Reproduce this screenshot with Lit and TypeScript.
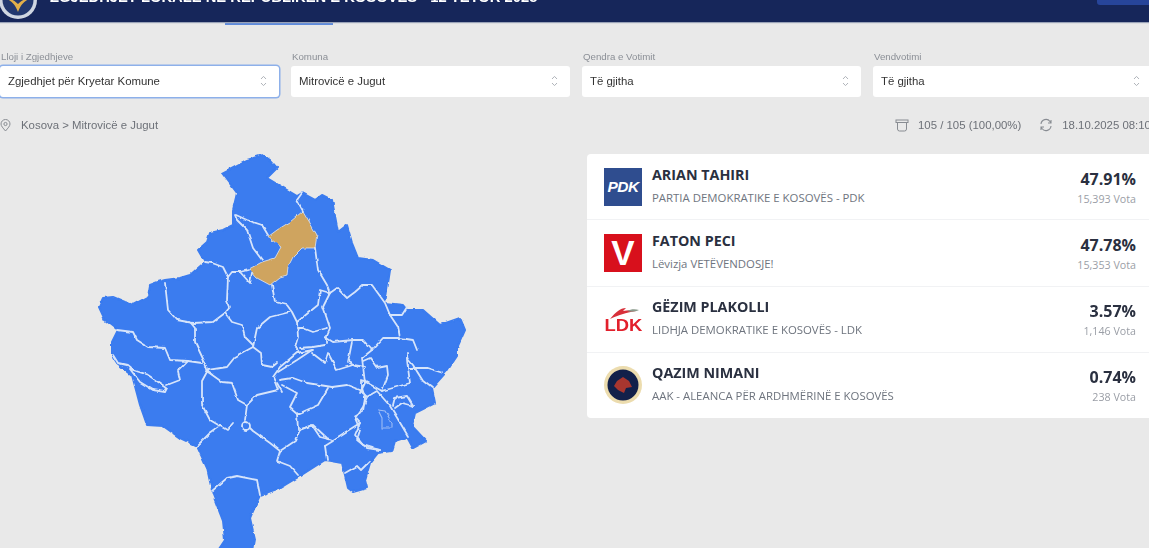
import { LitElement, html, css, svg } from "lit";
import { customElement } from "lit/decorators.js";

const OUTLINE = "263,155 270,160 277,168 267,178 287,190 297,196 302,193 315,200 322,195 332,200 338,232 347,225 352,243 358,258 373,260 390,270 385,303 403,305 407,310 423,310 440,325 460,318 465,330 457,348 457,356 447,371 432,388 435,403 415,413 412,426 426,441 413,448 407,437 395,441 392,451 378,453 370,463 365,480 367,488 353,492 348,488 345,475 342,463 325,460 300,476 280,488 260,495 250,518 255,540 253,552 217,552 225,540 223,521 213,495 207,468 197,446 180,438 163,426 147,425 140,405 132,375 117,363 112,355 112,342 118,330 105,320 99,307 103,298 113,297 125,302 133,305 148,297 150,285 158,282 165,280 180,278 190,275 205,262 198,250 207,242 210,233 223,230 233,225 233,210 237,193 222,173 247,160";

const GOLD = "269,236 277,230 285,225 290,222 303,211 310,223 317,235 315,248 302,248 293,257 288,267 287,275 280,277 270,285 257,278 249,269 262,262 275,258 281,247 272,240";

const LINES = [
  "235,215 237,220 247,230 253,248 262,260",
  "236,215 247,220 262,225 268,235",
  "205,262 212,263 223,267 228,277 232,272 240,272 248,270",
  "240,272 250,283 252,273",
  "302,193 297,200 303,211",
  "228,277 227,300 230,307 225,313 213,322 193,323 177,320 168,310 165,283",
  "225,313 232,322 242,325 245,337 253,345",
  "190,322 195,328 195,342 205,363 208,372",
  "208,370 202,381 202,405 210,420 220,426",
  "220,426 210,433 197,446",
  "208,372 222,382 232,383 238,400 247,405 245,420",
  "233,423 227,430 220,426",
  "247,405 257,395 278,390 273,377 280,367 297,353 313,350",
  "208,370 227,367 235,357 253,347 261,353 262,365 272,367 277,363",
  "117,330 133,332 137,340 148,347 165,348 170,360 188,361 202,363",
  "188,361 178,371 180,380 167,385",
  "113,355 118,363 127,365 133,370 148,375 167,388 165,392 153,390 140,382 133,373 127,365",
  "272,285 275,302 287,305 292,312 297,322 298,337 295,347 300,353",
  "290,312 270,317 257,328 253,347",
  "315,248 318,270 327,285 330,293 323,307 330,328 327,335 327,343",
  "330,293 320,290 318,305 297,322",
  "297,328 303,328 313,332 327,328",
  "300,348 313,347 325,345",
  "330,293 337,288 347,298 355,292 363,285 372,285 385,303 390,315 398,327 400,338 413,340 417,350",
  "390,315 402,315 407,307",
  "325,337 333,342 353,340 363,340 372,350 383,338 400,338",
  "352,342 348,362 357,367",
  "372,350 362,358 365,383 360,393",
  "312,353 325,363 328,353 337,370 353,365 365,367",
  "278,372 297,360 312,350",
  "280,380 293,378 307,383 332,387 347,385 360,390 367,397 363,407 355,418 360,430 357,440 367,448 380,450",
  "282,385 297,393 290,407 297,413 298,430 312,425 320,437 332,440",
  "328,388 318,405 300,413 297,413",
  "277,383 282,392",
  "300,430 295,441 280,451 270,443 253,431 250,428",
  "300,430 313,425 327,438 333,440 352,428 360,423 355,435 363,445 380,450",
  "360,423 354,416 363,411 365,398 377,391 390,406 405,431 408,436",
  "393,406 395,398 407,396 413,406",
  "395,408 402,403 413,406",
  "362,388 365,398",
  "362,388 362,380 382,391 393,388 410,383 408,368 407,358 413,365 423,381 432,388",
  "408,368 427,368 443,373",
  "363,361 370,358 377,368 387,366 388,375 382,391",
  "407,353 408,368",
  "280,451 277,461 290,466 298,475",
  "325,446 333,441",
  "325,446 327,460",
  "345,473 357,466 361,470 370,461",
  "212,491 227,478 237,476 257,480 260,495",
];

const LAKE = "378,410 382,418 382,428 392,428 392,423 385,411";

const FILTERS = [
  { label: "Lloji i Zgjedhjeve", value: "Zgjedhjet për Kryetar Komune", focus: true },
  { label: "Komuna", value: "Mitrovicë e Jugut", focus: false },
  { label: "Qendra e Votimit", value: "Të gjitha", focus: false },
  { label: "Vendvotimi", value: "Të gjitha", focus: false },
];

const RESULTS = [
  { logo: "pdk", name: "ARIAN TAHIRI", party: "PARTIA DEMOKRATIKE E KOSOVËS - PDK", pct: "47.91%", votes: "15,393 Vota" },
  { logo: "v", name: "FATON PECI", party: "Lëvizja VETËVENDOSJE!", pct: "47.78%", votes: "15,353 Vota" },
  { logo: "ldk", name: "GËZIM PLAKOLLI", party: "LIDHJA DEMOKRATIKE E KOSOVËS - LDK", pct: "3.57%", votes: "1,146 Vota" },
  { logo: "aak", name: "QAZIM NIMANI", party: "AAK - ALEANCA PËR ARDHMËRINË E KOSOVËS", pct: "0.74%", votes: "238 Vota" },
];

@customElement("app-root")
export class AppRoot extends LitElement {
  static styles = css`
    :host { display: block; width: 1149px; height: 548px; overflow: hidden; background: #e9e9e9; font-family: "Liberation Sans", Arial, sans-serif; }
    .page { filter: blur(0.55px); height: 548px; }
    .header { margin-top: -22px; height: 44px; background: #16265a; display: flex; align-items: center; padding-left: 50px; position: relative; box-shadow: 0 1px 1px #9aa3b8; }
    .title { color: #fff; font: 700 14.75px "Liberation Sans", sans-serif; white-space: nowrap; margin-bottom: 7px; }
    .crest { position: absolute; left: -2px; top: 2px; }
    .btn { position: absolute; right: 0; bottom: 17px; width: 52px; height: 10px; border-radius: 3px 0 0 3px; background: #27459a; }
    .tab { width: 108px; height: 2px; margin-left: 225px; margin-top: 1px; background: #5f8bdc; }
    .filters { display: grid; grid-template-columns: repeat(4, 279px); gap: 12px; margin-top: 26px; }
    .lab { font-size: 9.7px; color: #8b8f96; line-height: 11px; padding-left: 1px; margin-bottom: 4px; }
    .sel { height: 31px; box-sizing: border-box; border-radius: 3px; background: #fff; display: flex; align-items: center; justify-content: space-between; padding: 0 12px 1px 8px; font-size: 11.4px; color: #333; }
    .sel.focus { box-shadow: 0 0 0 1.5px #8db0ea; }
    .status { display: flex; align-items: center; justify-content: space-between; margin-top: 20px; height: 16px; font-size: 11.4px; color: #6d7178; white-space: nowrap; }
    .status svg { flex: none; }
    .st-l { display: flex; align-items: center; gap: 10px; }
    .st-r { display: flex; align-items: center; gap: 9px; width: 254px; }
    .st-r .gap { width: 4px; }
    .body { display: flex; margin-top: 21px; }
    .map { width: 587px; height: 394px; flex: none; display: block; }
    .cards { width: 570px; height: 264px; flex: none; background: #fff; border-radius: 4px; display: flex; flex-direction: column; }
    .row { flex: 1; display: flex; align-items: center; padding: 0 21px 0 17px; border-bottom: 1px solid #f1f2f4; }
    .row:last-child { border-bottom: 0; }
    .logo { width: 38px; height: 38px; flex: none; margin-right: 10px; display: flex; align-items: center; justify-content: center; }
    .pdk { background: #2f4d8f; color: #fff; font: italic 700 15.5px "Liberation Sans", sans-serif; letter-spacing: -0.5px; }
    .vv { background: #d8101c; color: #fff; font: 700 35px "Liberation Sans", sans-serif; }
    .info { flex: 1; min-width: 0; margin-top: -4px; }
    .name { font: 700 14.3px "Open Sans", sans-serif; color: #2a3040; line-height: 19px; }
    .party { font: 400 11.4px "Open Sans", sans-serif; color: #6e747e; margin-top: 7px; line-height: 14px; }
    .nums { text-align: right; margin-top: 2px; }
    .pct { font: 700 16px "Open Sans", sans-serif; color: #2a3040; line-height: 19px; }
    .votes { font: 400 10.7px "Open Sans", sans-serif; color: #9a9ea6; margin-top: 3px; line-height: 14px; }
    .ldk { flex-direction: column; }
    .ldk svg { display: block; margin-bottom: -1px; }
    .ldk span { color: #e2202c; font: 700 16px "Liberation Sans", sans-serif; line-height: 13px; transform: scaleX(1.15); }
  `;

  logo(kind: string) {
    if (kind === "pdk") return html`<div class="logo pdk">PDK</div>`;
    if (kind === "v") return html`<div class="logo vv">V</div>`;
    if (kind === "ldk")
      return html`<div class="logo ldk">
        <svg width="34" height="14" viewBox="0 0 34 14"><path d="M4 13 C10 6 14 2 20 2 L17 5 C22 4 26 4 30 5 C24 6 20 7 17 8 C13 9 8 11 4 13Z" fill="#d8303a"/><path d="M21 5 C25 3 29 3 33 4 C29 6 25 6 21 5Z" fill="#8a9a8c"/></svg>
        <span>LDK</span>
      </div>`;
    return html`<div class="logo">
      <svg width="38" height="38" viewBox="0 0 38 38"><circle cx="19" cy="19" r="19" fill="#ecdcae"/><circle cx="19" cy="19" r="15.5" fill="#12204a"/><path d="M13 15 L19 11 L25 15 L28 21 L22 22 L20 27 L14 24 L10 20Z" fill="#a8362f"/></svg>
    </div>`;
  }

  chev() {
    return html`<svg width="7" height="14" viewBox="0 0 7 14" fill="none" stroke="#b0b4ba" stroke-width="1"><path d="M1 5 L3.5 2.4 L6 5"/><path d="M1 9 L3.5 11.6 L6 9"/></svg>`;
  }

  render() {
    return html`<div class="page">
      <header class="header">
        <svg class="crest" width="40" height="40" viewBox="0 0 40 40">
          <circle cx="20" cy="20" r="19" fill="#cfd6e2"/><circle cx="20" cy="20" r="15.5" fill="#22386f"/>
          <path d="M8 18 C14 22 17 24 20 32 C23 24 26 22 32 18 C26 19 23 21 20 24 C17 21 14 19 8 18Z" fill="#e2b04a"/>
        </svg>
        <div class="title">ZGJEDHJET LOKALE NË REPUBLIKËN E KOSOVËS - 12 TETOR 2025</div>
        <div class="btn"></div>
      </header>
      <div class="tab"></div>
      <div class="filters">
        ${FILTERS.map((f) => html`<div class="f">
          <div class="lab">${f.label}</div>
          <div class="sel ${f.focus ? "focus" : ""}"><span>${f.value}</span>${this.chev()}</div>
        </div>`)}
      </div>
      <div class="status">
        <div class="st-l">
          <svg width="11" height="13" viewBox="0 0 11 13" fill="none" stroke="#888c92" stroke-width="1"><path d="M5.5 12 C3 9 1 7 1 5 A4.5 4.5 0 0 1 10 5 C10 7 8 9 5.5 12Z"/><circle cx="5.5" cy="5" r="1.6"/></svg>
          <span>Kosova &gt; Mitrovicë e Jugut</span>
        </div>
        <div class="st-r">
          <svg width="14" height="13" viewBox="0 0 14 13" fill="none" stroke="#888c92" stroke-width="1"><rect x="1" y="1" width="12" height="2.5"/><path d="M2.5 3.5 V10 A2 2 0 0 0 4.5 12 H9.5 A2 2 0 0 0 11.5 10 V3.5"/></svg>
          <span>105 / 105 (100,00%)</span>
          <span class="gap"></span>
          <svg width="14" height="14" viewBox="0 0 14 14" fill="none" stroke="#888c92" stroke-width="1.1"><path d="M2 6 A5 5 0 0 1 11 3.5 L12 5 M12 2 V5 H9"/><path d="M12 8 A5 5 0 0 1 3 10.5 L2 9 M2 12 V9 H5"/></svg>
          <span>18.10.2025 08:10</span>
        </div>
      </div>
      <div class="body">
        <svg class="map" viewBox="0 154 587 394">
          <defs>
            <filter id="wig" x="0" y="150" width="587" height="410" filterUnits="userSpaceOnUse">
              <feTurbulence type="fractalNoise" baseFrequency="0.12" numOctaves="2" seed="4"/>
              <feDisplacementMap in="SourceGraphic" scale="3" xChannelSelector="R" yChannelSelector="G"/>
            </filter>
          </defs>
          <g filter="url(#wig)">
            <polygon points=${OUTLINE} fill="#3a7bef" stroke="#3a7bef" stroke-width="2" stroke-linejoin="round"/>
            <polygon points=${GOLD} fill="#cfa45e" stroke="#dfe6f2" stroke-width="0.8"/>
            ${LINES.map((l) => svg`<polyline points=${l} fill="none" stroke="#d6e4fb" stroke-width="1.8" stroke-linejoin="round" stroke-linecap="round"/>`)}
            <circle cx="246" cy="426" r="4" fill="none" stroke="#d6e4fb" stroke-width="1.8"/>
            <polygon points=${LAKE} fill="none" stroke="#9dbdf5" stroke-width="1.1"/>
          </g>
        </svg>
        <div class="cards">
          ${RESULTS.map((r) => html`<div class="row">
            ${this.logo(r.logo)}
            <div class="info"><div class="name">${r.name}</div><div class="party">${r.party}</div></div>
            <div class="nums"><div class="pct">${r.pct}</div><div class="votes">${r.votes}</div></div>
          </div>`)}
        </div>
      </div>
    </div>`;
  }
}
